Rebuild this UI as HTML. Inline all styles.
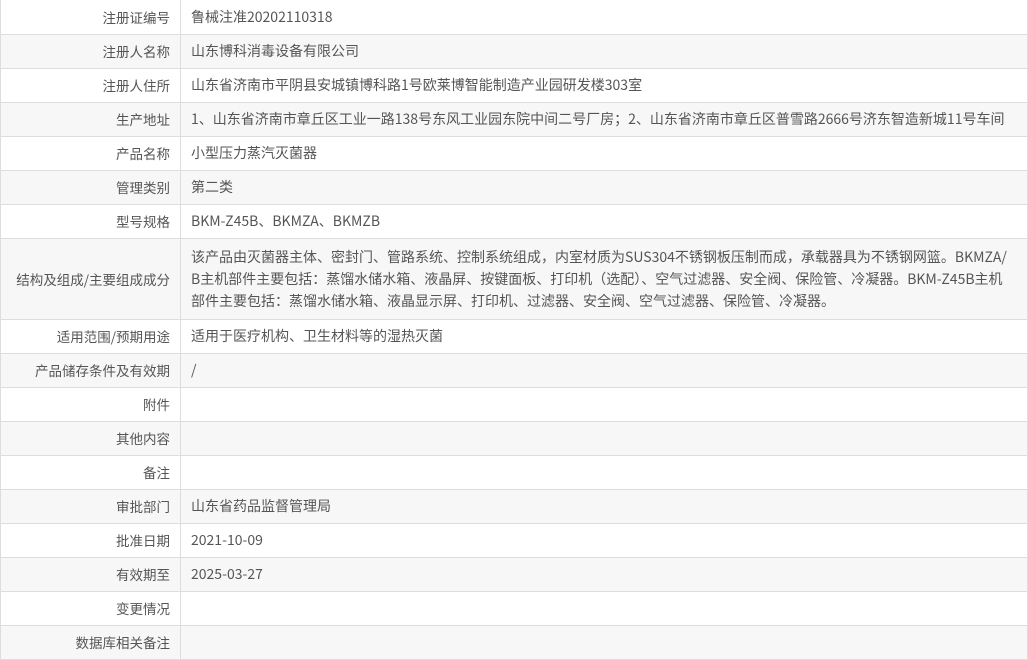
<!DOCTYPE html>
<html><head><meta charset="utf-8"><style>
body{margin:0;background:#fff;font-family:"Noto Sans CJK SC","Liberation Sans",sans-serif;font-size:14px;color:#555}
table{border-collapse:collapse;width:1028px;table-layout:fixed}
td{border:1px solid #ddd;height:34px;padding:0 10px;line-height:22px;box-sizing:border-box;white-space:nowrap;overflow:hidden}
td.l{width:180px;text-align:right;padding-right:10px;font-size:13.5px}
tr:nth-child(even) td{background:#f7f7f7}
tr.big td{height:81px;line-height:22px;padding-top:0}
</style></head><body>
<table>
<tr><td class="l" style="border-top:0">注册证编号</td><td style="border-top:0">鲁械注准20202110318</td></tr>
<tr><td class="l">注册人名称</td><td>山东博科消毒设备有限公司</td></tr>
<tr><td class="l">注册人住所</td><td>山东省济南市平阴县安城镇博科路1号欧莱博智能制造产业园研发楼303室</td></tr>
<tr><td class="l">生产地址</td><td>1、山东省济南市章丘区工业一路138号东风工业园东院中间二号厂房；2、山东省济南市章丘区普雪路2666号济东智造新城11号车间</td></tr>
<tr><td class="l">产品名称</td><td>小型压力蒸汽灭菌器</td></tr>
<tr><td class="l">管理类别</td><td>第二类</td></tr>
<tr><td class="l">型号规格</td><td>BKM-Z45B、BKMZA、BKMZB</td></tr>
<tr class="big"><td class="l">结构及组成/主要组成成分</td><td>该产品由灭菌器主体、密封门、管路系统、控制系统组成，内室材质为SUS304不锈钢板压制而成，承载器具为不锈钢网篮。BKMZA/<br>B主机部件主要包括：蒸馏水储水箱、液晶屏、按键面板、打印机（选配）、空气过滤器、安全阀、保险管、冷凝器。BKM-Z45B主机<br>部件主要包括：蒸馏水储水箱、液晶显示屏、打印机、过滤器、安全阀、空气过滤器、保险管、冷凝器。</td></tr>
<tr><td class="l">适用范围/预期用途</td><td>适用于医疗机构、卫生材料等的湿热灭菌</td></tr>
<tr><td class="l">产品储存条件及有效期</td><td>/</td></tr>
<tr><td class="l">附件</td><td></td></tr>
<tr><td class="l">其他内容</td><td></td></tr>
<tr><td class="l">备注</td><td></td></tr>
<tr><td class="l">审批部门</td><td>山东省药品监督管理局</td></tr>
<tr><td class="l">批准日期</td><td>2021-10-09</td></tr>
<tr><td class="l">有效期至</td><td>2025-03-27</td></tr>
<tr><td class="l">变更情况</td><td></td></tr>
<tr><td class="l">数据库相关备注</td><td></td></tr>
</table>
</body></html>
